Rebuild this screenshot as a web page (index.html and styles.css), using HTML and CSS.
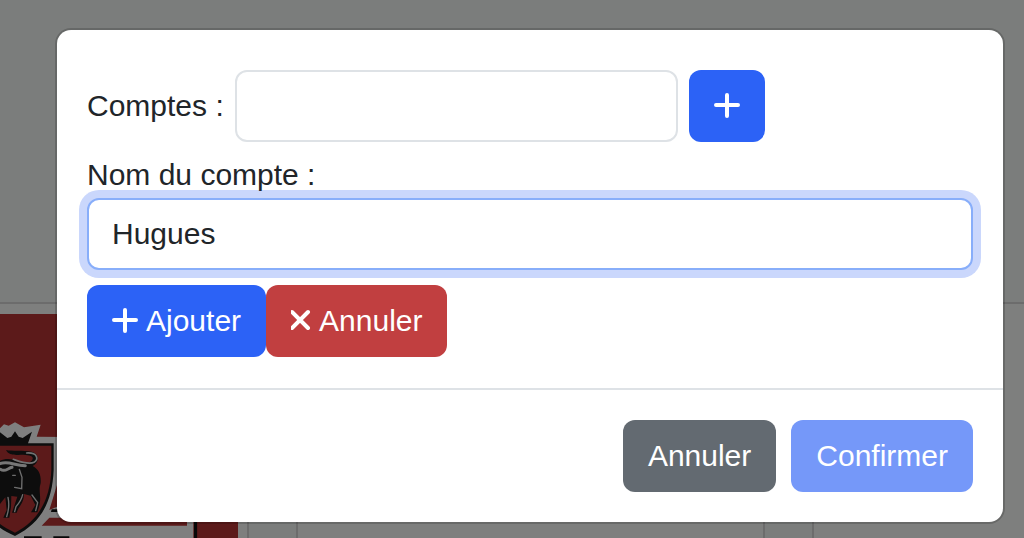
FILE: index.html
```html
<!DOCTYPE html>
<html lang="fr">
<head>
    <meta charset="UTF-8">
    <meta name="viewport" content="width=device-width, initial-scale=1.0">
    <title>Comptes</title>
    <link rel="stylesheet" href="styles.css">
</head>
<body>
    <!-- Cartes derrière la fenêtre -->
    <main class="cards">
        <div class="card">
            <svg class="card-logo" viewBox="0 72 714 672" aria-hidden="true">
                <path fill="#b83434" d="M0 72h714v672H0z"/>
                <path fill="#fff" d="M0 415 12 403 26 407 45 397 72 412 122 404 110 440 580 444V744H0z"/>
                <path fill="#b83434" d="M171 585V650L148 660zM148 683H561V707H125z"/>
                <path fill="#111" d="M155 658h40v8h-42zM582 444h10v300h-10zM72 739h53v5H72zM160 739h48v5h-48z"/>
                <path fill="#b83434" d="M592 444h122v300H592z"/>
                <path fill="#1a1a1a" d="M0 427 22 444 34 440 45 424 56 440 68 444 96 425 84 460H161V540C157 640 120 700 45 738 28 730 12 722 0 713z"/>
                <path fill="#b83434" d="M0 467H154V540C150 630 115 692 45 728 28 720 12 711 0 702z"/>
                <path fill="#1a1a1a" d="M18 480C35 484 70 480 95 485 120 492 118 518 98 528 118 538 124 558 122 580 114 605 126 620 117 650L112 667H93L106 645 92 617 72 612C72 640 55 650 50 668H36L52 620 34 618 33 650 28 683H10L20 660 16 622 0 642V512C15 506 35 505 50 514 65 520 86 522 95 512 106 498 88 494 62 494 45 496 25 495 18 480z"/>
                <path fill="none" stroke="#e4e4e4" stroke-width="5" stroke-linecap="round" d="M80 489C114 487 116 508 102 517 85 525 60 515 40 508"/>
                <path fill="none" stroke="#eee" stroke-width="9" stroke-linecap="round" d="M0 521C25 512 42 526 76 527M2 538C14 548 24 534 36 532"/>
                <path fill="none" stroke="#ddd" stroke-width="4" stroke-linecap="round" d="M58 538 66 562 65 596 44 592M68 614Q64 632 48 650L44 665M24 622Q30 650 20 680M96 615 113 638 107 662M38 556h8"/>
            </svg>
        </div>
        <div class="card"></div>
        <div class="card"></div>
    </main>

    <div class="backdrop">
        <form class="dialog" role="dialog" aria-label="Comptes">
            <div class="dialog-body">
                <div class="account-row">
                    <label for="compte">Comptes :</label>
                    <input type="text" id="compte" class="field field-half">
                    <button type="button" class="btn btn-primary" aria-label="Nouveau compte">
                        <svg class="icon-plus" viewBox="0 0 26 28"><path d="M13 3v21M2 13h22"/></svg>
                    </button>
                </div>
                <div class="new-account">
                    <label for="nom">Nom du compte :</label>
                    <input type="text" id="nom" class="field field-active" value="Hugues">
                </div>
                <div class="new-actions">
                    <button type="button" class="btn btn-primary">
                        <svg class="icon-plus" viewBox="0 0 26 28"><path d="M13 3v21M2 13h22"/></svg>
                        Ajouter
                    </button>
                    <button type="button" class="btn btn-danger">
                        <svg class="icon-cross" viewBox="0 0 20 28"><path d="M1 5l16 16M17 5L1 21"/></svg>
                        Annuler
                    </button>
                </div>
            </div>
            <div class="dialog-footer">
                <button type="button" class="btn btn-secondary">Annuler</button>
                <button type="submit" class="btn btn-primary" disabled>Confirmer</button>
            </div>
        </form>
    </div>
</body>
</html>
```

FILE: styles.css
```css
:root {
    --primary: #2c62f6;
    --danger: #c13f40;
    --secondary: #636a71;
    --text: #212529;
    --border: #dee2e6;
    --radius: 12px;
}

* {
    box-sizing: border-box;
}

body {
    margin: 0;
    font-family: "Liberation Sans", Arial, sans-serif;
    font-size: 30px;
    line-height: 46px;
    color: var(--text);
    background-color: #f7faf8;
}

/* Arrière-plan */
.cards {
    display: grid;
    grid-template-columns: 249fr 469fr 212fr;
    gap: 47px;
    height: 100vh;
    padding-top: 302px;
    overflow: hidden;
}

.card {
    min-height: 0;
    padding-top: 10px;
    border: 2px solid #d8d8d8;
    border-bottom: 0;
    background-color: #fcfefc;
    overflow: hidden;
}

.card:first-child {
    border-left: 0;
    padding-right: 9px;
}

.card:last-child {
    border-right: 0;
}

.card-logo {
    display: block;
    width: 100%;
}

/* Fenêtre */
.backdrop {
    position: absolute;
    inset: 0;
    padding: 30px 21px 0 57px;
    background-color: rgba(0, 0, 0, 0.5);
}

.dialog {
    border-radius: 14px;
    background-color: #fff;
    box-shadow: 0 0 0 2px rgba(0, 0, 0, 0.17);
}

.dialog-body {
    padding: 40px 30px 31px;
}

.account-row {
    display: flex;
    align-items: center;
    gap: 11px;
    margin-bottom: 10px;
}

.new-account label {
    display: block;
}

.new-actions {
    display: flex;
    margin-top: 15px;
}

.field {
    display: block;
    width: 100%;
    height: 72px;
    padding: 0 23px;
    border: 2px solid var(--border);
    border-radius: var(--radius);
    outline: none;
    font: inherit;
    color: inherit;
    background-color: #fff;
}

.field-half {
    width: 50%;
}

.field-active,
.field:focus {
    border-color: #88aefa;
    box-shadow: 0 0 0 8px #cad7fc;
}

.btn {
    display: flex;
    align-items: center;
    gap: 8px;
    height: 72px;
    padding: 0 25px;
    border: 0;
    border-radius: var(--radius);
    font: inherit;
    color: #fff;
    cursor: pointer;
}

.btn-primary {
    background-color: var(--primary);
}

.btn-danger {
    background-color: var(--danger);
}

.btn-secondary {
    background-color: var(--secondary);
}

.btn:disabled {
    opacity: 0.65;
    cursor: default;
}

.btn svg {
    flex: none;
    height: 28px;
    fill: none;
    stroke: #fff;
    stroke-width: 4;
    stroke-linecap: round;
}

.icon-plus {
    width: 26px;
}

.icon-cross {
    width: 20px;
}

.dialog-footer {
    display: flex;
    justify-content: flex-end;
    gap: 15px;
    padding: 30px;
    border-top: 2px solid var(--border);
}
```
